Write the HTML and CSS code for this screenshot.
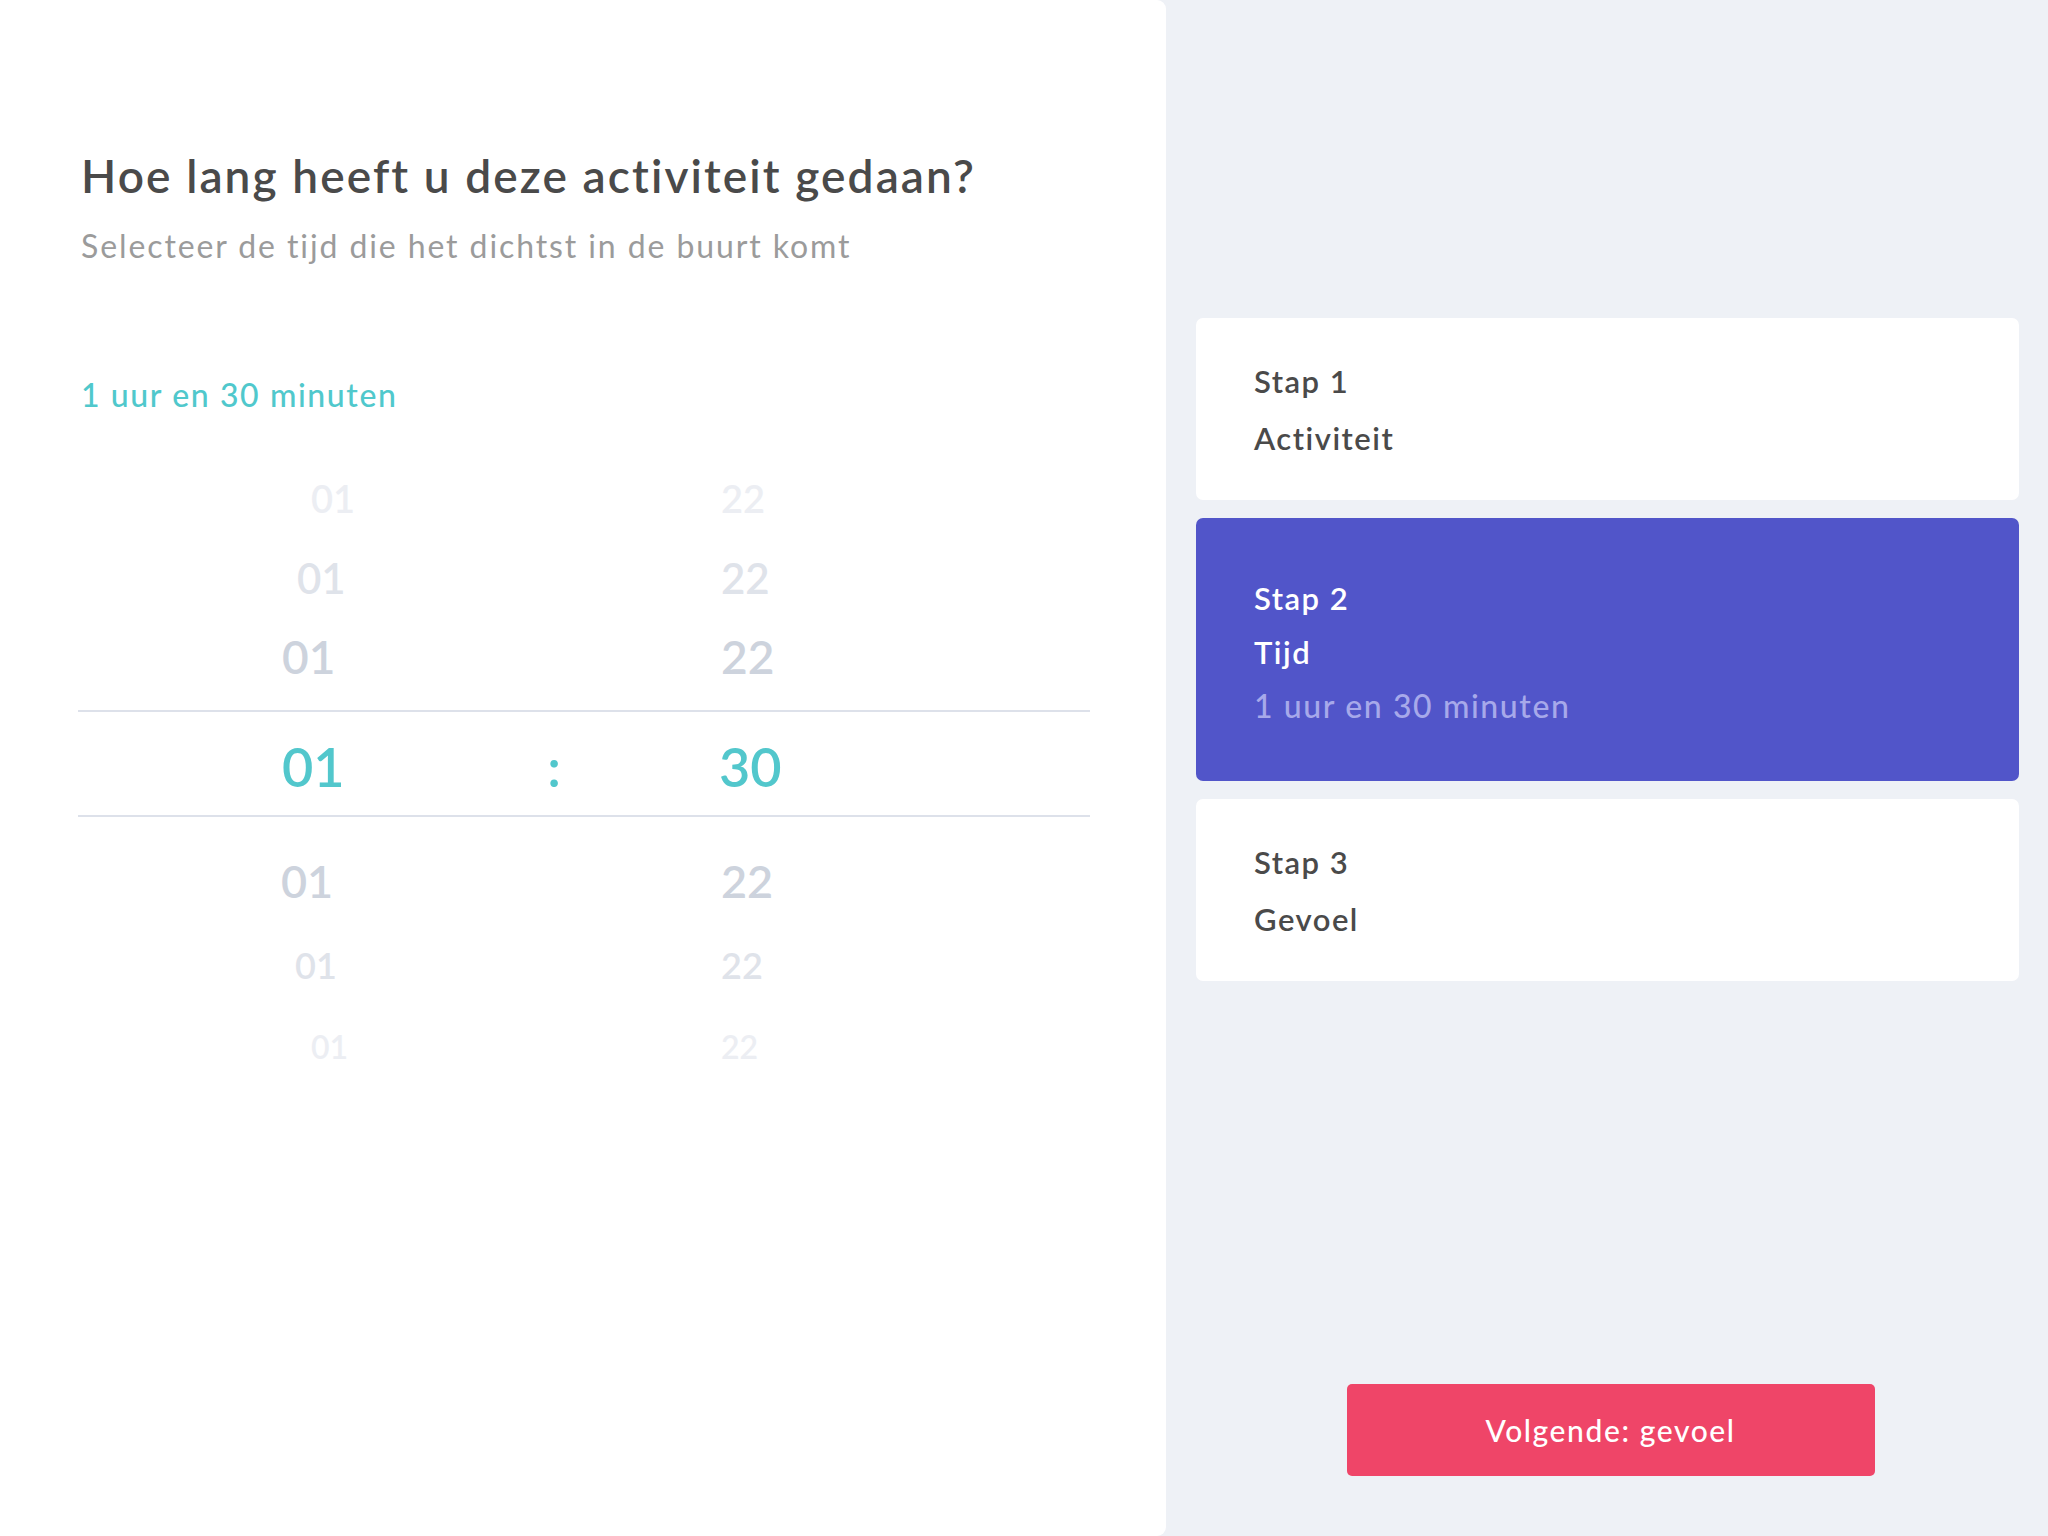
FILE: index.html
```html
<!DOCTYPE html>
<html lang="nl">
<head>
<meta charset="utf-8">
<title>Hoe lang heeft u deze activiteit gedaan?</title>
<link rel="stylesheet" href="styles.css">
</head>
<body>
<div class="app">
  <main class="left">
    <h1 class="title">Hoe lang heeft u deze activiteit gedaan?</h1>
    <p class="subtitle">Selecteer de tijd die het dichtst in de buurt komt</p>
    <p class="summary">1 uur en 30 minuten</p>

    <div class="picker">
      <div class="row r1"><span class="hr">01</span><span class="colon"></span><span class="mn">22</span></div>
      <div class="row r2"><span class="hr">01</span><span class="colon"></span><span class="mn">22</span></div>
      <div class="row r3"><span class="hr">01</span><span class="colon"></span><span class="mn">22</span></div>
      <div class="band">
        <div class="row sel"><span class="hr">01</span><span class="colon">:</span><span class="mn">30</span></div>
      </div>
      <div class="row r5"><span class="hr">01</span><span class="colon"></span><span class="mn">22</span></div>
      <div class="row r6"><span class="hr">01</span><span class="colon"></span><span class="mn">22</span></div>
      <div class="row r7"><span class="hr">01</span><span class="colon"></span><span class="mn">22</span></div>
    </div>
  </main>

  <aside class="right">
    <div class="steps">
      <div class="step">
        <div class="step-num">Stap 1</div>
        <div class="step-name">Activiteit</div>
      </div>
      <div class="step active">
        <div class="step-num">Stap 2</div>
        <div class="step-name">Tijd</div>
        <div class="step-value">1 uur en 30 minuten</div>
      </div>
      <div class="step">
        <div class="step-num">Stap 3</div>
        <div class="step-name">Gevoel</div>
      </div>
    </div>
    <button class="next">Volgende: gevoel</button>
  </aside>
</div>
</body>
</html>
```

FILE: styles.css
```css
* { box-sizing: border-box; }

html, body {
  margin: 0;
  padding: 0;
}

body {
  background: #eef1f6;
  font-family: "Lato", "Liberation Sans", sans-serif;
  color: #4a4a4a;
}

.app {
  display: grid;
  grid-template-columns: 1166px 1fr;
  height: 1536px;
}

/* ---------- left panel ---------- */
.left {
  background: #ffffff;
  border-radius: 0 9px 9px 0;
  padding: 149px 0 0 78px;
}

.title {
  margin: 0 0 0 3px;
  font-size: 46px;
  line-height: 54px;
  font-weight: 600;
  letter-spacing: 2.1px;
  color: #4a4a4a;
}

.subtitle {
  margin: 23px 0 0 3px;
  font-size: 32px;
  line-height: 40px;
  font-weight: 400;
  letter-spacing: 1.9px;
  color: #9b9b9b;
}

.summary {
  margin: 109px 0 0 3px;
  font-size: 32px;
  line-height: 40px;
  font-weight: 500;
  letter-spacing: 1.6px;
  color: #50c8cc;
}

.picker {
  width: 1012px;
  margin-top: 43px;
}

.row {
  display: flex;
  font-weight: 600;
  white-space: nowrap;
}

.hr {
  display: block;
  width: 443px;
}

.colon {
  display: block;
  width: 66px;
  text-align: center;
}

.mn {
  display: block;
  padding-left: 134px;
}

.r1 { height: 80px; line-height: 80px; font-size: 38px; color: #eceef3; }
.r2 { height: 80px; line-height: 80px; font-size: 42px; color: #dfe3ea; }
.r3 { height: 78px; line-height: 78px; font-size: 46px; color: #cdd3dd; }
.r5 { height: 84px; line-height: 84px; font-size: 45px; color: #cdd3dd; margin-top: 22px; }
.r6 { height: 84px; line-height: 84px; font-size: 36px; color: #dfe3ea; }
.r7 { height: 80px; line-height: 80px; font-size: 32px; color: #eceef3; }

.r1 .hr { padding-left: 233px; }
.r2 .hr { padding-left: 219px; }
.r3 .hr { padding-left: 204px; }
.r5 .hr { padding-left: 203px; }
.r6 .hr { padding-left: 217px; }
.r7 .hr { padding-left: 233px; }

.band {
  margin-top: 14px;
  border-top: 2px solid #dde1ea;
  border-bottom: 2px solid #dde1ea;
  padding-top: 8px;
  padding-bottom: 1px;
}

.sel {
  height: 94px;
  line-height: 94px;
  font-size: 54px;
  color: #52c7cc;
}

.sel .hr { padding-left: 204px; }
.sel .mn { padding-left: 132px; }

/* ---------- right panel ---------- */
.right {
  display: flex;
  flex-direction: column;
  padding: 318px 29px 60px 30px;
}

.steps {
  display: flex;
  flex-direction: column;
  gap: 18px;
}

.step {
  background: #ffffff;
  border-radius: 7px;
  padding: 35px 58px 33px;
  font-size: 31px;
  line-height: 57px;
  font-weight: 600;
  letter-spacing: 1.5px;
  color: #4a4a4a;
}

.step.active {
  background: #5155c9;
  color: #ffffff;
  padding: 53px 58px 48px;
  line-height: 54px;
}

.step-value {
  font-size: 32px;
  font-weight: 500;
  letter-spacing: 1.6px;
  color: #a7a9ea;
}

.next {
  margin-top: auto;
  align-self: center;
  width: 528px;
  height: 92px;
  margin-left: 6px;
  border: none;
  border-radius: 5px;
  background: #ef4568;
  color: #ffffff;
  font-family: "Lato", "Liberation Sans", sans-serif;
  font-size: 30px;
  font-weight: 500;
  letter-spacing: 1.6px;
  padding: 0;
}
```
